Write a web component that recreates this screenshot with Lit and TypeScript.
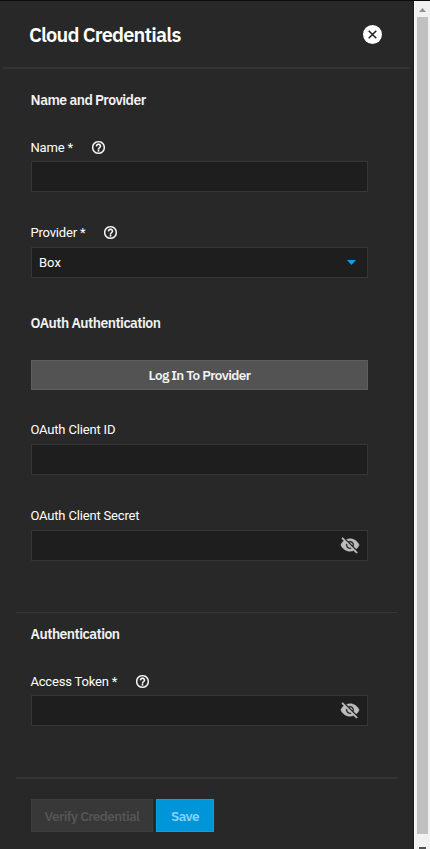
import { LitElement, html, css, svg, nothing } from "lit";
import { customElement, property } from "lit/decorators.js";

const helpIcon = html`<svg class="help" viewBox="2 2 20 20" aria-hidden="true">
  ${svg`<path fill="#fff" stroke="#fff" stroke-width=".4" d="M11 18h2v-2h-2v2zm1-16C6.48 2 2 6.48 2 12s4.48 10 10 10 10-4.48 10-10S17.52 2 12 2zm0 18c-4.41 0-8-3.59-8-8s3.59-8 8-8 8 3.59 8 8-3.59 8-8 8zm0-14c-2.21 0-4 1.79-4 4h2c0-1.1.9-2 2-2s2 .9 2 2c0 2-3 1.75-3 5h2c0-2.25 3-2.5 3-5 0-2.21-1.79-4-4-4z"/>`}
</svg>`;

const eyeOffIcon = html`<svg class="eye" viewBox="0 0 24 24" aria-hidden="true">
  ${svg`<path fill="#bdbdbd" stroke="#bdbdbd" stroke-width=".5" d="M12 7c2.76 0 5 2.24 5 5 0 .65-.13 1.26-.36 1.83l2.92 2.92c1.51-1.26 2.7-2.89 3.43-4.75-1.73-4.39-6-7.5-11-7.5-1.4 0-2.74.25-3.98.7l2.16 2.16C10.74 7.13 11.35 7 12 7zM2 4.27l2.28 2.28.46.46C3.08 8.3 1.78 10.02 1 12c1.73 4.39 6 7.5 11 7.5 1.55 0 3.03-.3 4.38-.84l.42.42L19.73 22 21 20.73 3.27 3 2 4.27zM7.53 9.8l1.55 1.55c-.05.21-.08.43-.08.65 0 1.66 1.34 3 3 3 .22 0 .44-.03.65-.08l1.55 1.55c-.67.33-1.41.53-2.2.53-2.76 0-5-2.24-5-5 0-.79.2-1.53.53-2.2zm4.31-.78l3.15 3.15.02-.16c0-1.66-1.34-3-3-3l-.17.01z"/>`}
</svg>`;

@customElement("form-field")
class FormField extends LitElement {
  @property() label = "";
  @property() value = "";
  @property() kind = "text";
  @property({ type: Boolean }) required = false;

  static styles = css`
    :host { display: block; }
    .label {
      display: flex;
      align-items: center;
      height: 20px;
      padding-left: 0.4px;
      font-size: 13px;
      letter-spacing: -0.17px;
      color: #fff;
      white-space: nowrap;
    }
    .help { width: 13px; height: 13px; margin: 1px 0 0 18.7px; }
    .box {
      box-sizing: border-box;
      display: flex;
      align-items: center;
      justify-content: space-between;
      width: 337px;
      height: 31px;
      margin: var(--label-gap, 5px) 0 0 1px;
      padding: 0 7px;
      border: 1px solid #363636;
      background: #1e1e1e;
      color: #fff;
      font-size: 13px;
    }
    .eye { width: 20px; height: 20px; margin-top: -2px; }
    .arrow { width: 9px; height: 5px; margin-right: 4px; }
  `;

  render() {
    return html`
      <div class="label"><span>${this.label}${this.required ? " *" : ""}</span>${this.required ? helpIcon : nothing}</div>
      <div class="box">
        <span>${this.value}</span>
        ${this.kind === "secret" ? eyeOffIcon : nothing}
        ${this.kind === "select"
          ? html`<svg class="arrow" viewBox="0 0 9 5"><path fill="#0a9fe6" d="M0 0h9L4.5 5z"/></svg>`
          : nothing}
      </div>`;
  }
}

@customElement("app-root")
class AppRoot extends LitElement {
  static styles = css`
    :host {
      display: flex;
      box-sizing: border-box;
      height: 849px;
      overflow: hidden;
      background: #282828;
      border-top: 1px solid #0c0c0c;
      font-family: Roboto, sans-serif;
      color: #fff;
    }
    .panel { width: 414px; box-sizing: border-box; border-right: 1px solid #181818; }
    header {
      box-sizing: border-box;
      display: flex;
      align-items: center;
      justify-content: space-between;
      height: 68px;
      margin: 0 3px;
      padding: 0 28px 0 26px;
      border-bottom: 2px solid #333;
    }
    h1, h2 { margin: 0; font-family: "IBM Plex Sans", Roboto, sans-serif; white-space: nowrap; }
    h1 { font-size: 20px; font-weight: 600; line-height: 26px; letter-spacing: -0.8px; padding-top: 1px; }
    h2 { font-size: 14px; font-weight: 600; line-height: 20px; letter-spacing: -0.53px; color: #f2f2f2; padding-left: 0.6px; }
    .close { width: 19px; height: 19px; }
    .section { padding-left: 30px; }
    .first { padding-top: 21px; }
    .after-heading { margin-top: 27px; --label-gap: 4px; }
    .provider { margin-top: 30px; }
    .oauth { margin-top: 35px; }
    button {
      display: block;
      box-sizing: border-box;
      padding: 0;
      font: 600 13.5px "IBM Plex Sans", Roboto, sans-serif;
      letter-spacing: -0.6px;
    }
    .login {
      width: 337px;
      height: 30px;
      margin: 27px 0 0 1px;
      border: 1px solid #5e5e5e;
      background: #535353;
      color: #f2f2f2;
    }
    .client-id { margin-top: 29px; }
    .client-secret { margin-top: 30px; }
    .rule { width: 381px; height: 1px; margin: 51px 0 11px 16px; background: #363636; }
    .rule.last { height: 2px; margin: 51px 0 20px 16px; background: #343434; }
    .token { margin-top: 27px; --label-gap: 4px; }
    .actions { display: flex; gap: 3px; padding-left: 31px; }
    .verify { width: 122px; height: 33px; border: 1px solid #3c3c3c; background: #383838; color: #555; }
    .save { width: 58px; height: 33px; border: 1px solid #0aa0e6; background: #0095d9; color: #8bd3f5; }
    .scrollbar {
      display: flex;
      flex-direction: column;
      align-items: center;
      width: 16px;
      background: #f1f1f1;
      border-left: 1px solid #fff;
      box-sizing: border-box;
    }
    .up { width: 7px; height: 4px; margin: 7px 0 5px; }
    .thumb { width: 11px; height: 817px; background: #c1c1c1; margin-right: 1px; }
    .down { width: 7px; height: 2px; margin-top: 13px; background: #505050; }
  `;

  render() {
    return html`
      <div class="panel">
        <header>
          <h1>Cloud Credentials</h1>
          <svg class="close" viewBox="0 0 19 19" aria-label="Close">
            <circle cx="9.5" cy="9.5" r="9.5" fill="#fff" />
            <path d="M5.7 5.7l7.6 7.6M13.3 5.7l-7.6 7.6" stroke="#222" stroke-width="1.5" />
          </svg>
        </header>
        <div class="section first">
          <h2>Name and Provider</h2>
          <form-field class="after-heading" label="Name" required></form-field>
          <form-field class="provider" label="Provider" value="Box" kind="select" required></form-field>
        </div>
        <div class="section oauth">
          <h2>OAuth Authentication</h2>
          <button class="login">Log In To Provider</button>
          <form-field class="client-id" label="OAuth Client ID"></form-field>
          <form-field class="client-secret" label="OAuth Client Secret" kind="secret"></form-field>
        </div>
        <div class="rule"></div>
        <div class="section">
          <h2>Authentication</h2>
          <form-field class="token" label="Access Token" kind="secret" required></form-field>
        </div>
        <div class="rule last"></div>
        <div class="section actions">
          <button class="verify">Verify Credential</button>
          <button class="save">Save</button>
        </div>
      </div>
      <div class="scrollbar">
        <svg class="up" viewBox="0 0 7 4"><path fill="#909090" d="M3.5 0L7 4H0z" /></svg>
        <div class="thumb"></div>
        <div class="down"></div>
      </div>`;
  }
}
